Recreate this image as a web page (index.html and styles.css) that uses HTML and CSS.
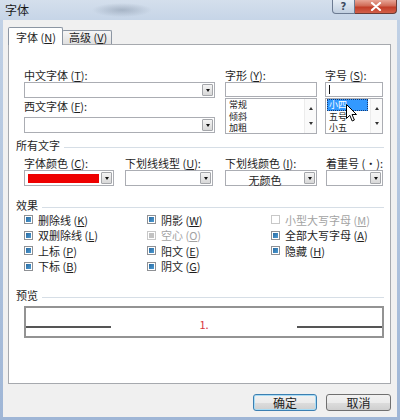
FILE: index.html
```html
<!DOCTYPE html>
<html lang="zh-CN">
<head>
<meta charset="utf-8">
<title>字体</title>
<link rel="stylesheet" href="styles.css">
</head>
<body>
<div class="window">
  <div class="titlebar">
    <span class="title">字体</span>
    <div class="caption">
      <span class="cap-help">?</span>
      <span class="cap-close"><svg width="12" height="9" viewBox="0 0 12 9"><path d="M2 1 L10 8 M10 1 L2 8" stroke="#fff" stroke-width="2.2" stroke-linecap="round"/></svg></span>
    </div>
  </div>
  <div class="client">
    <div class="tabs">
      <div class="tab active">字体 (<u>N</u>)</div>
      <div class="tab">高级 (<u>V</u>)</div>
    </div>
    <div class="panel">
      <div class="fonts">
        <div class="fcol c-main">
          <div class="lbl">中文字体 (<u>T</u>):</div>
          <div class="combo"><span class="dd"></span></div>
          <div class="lbl l2">西文字体 (<u>F</u>):</div>
          <div class="combo c2"><span class="dd"></span></div>
        </div>
        <div class="fcol c-style">
          <div class="lbl">字形 (<u>Y</u>):</div>
          <div class="edit"></div>
          <div class="list">
            <div class="items"><div class="it">常规</div><div class="it">倾斜</div><div class="it">加粗</div></div>
            <div class="vscroll"><span class="up"></span><span class="down"></span></div>
          </div>
        </div>
        <div class="fcol c-size">
          <div class="lbl">字号 (<u>S</u>):</div>
          <div class="edit"><span class="caret"></span></div>
          <div class="list">
            <div class="items"><div class="it sel">小四</div><div class="it">五号</div><div class="it">小五</div></div>
            <div class="vscroll"><span class="up"></span><span class="down"></span></div>
          </div>
        </div>
      </div>

      <div class="group g1">所有文字</div>
      <div class="row2">
        <div class="rcol r1">
          <div class="lbl">字体颜色 (<u>C</u>):</div>
          <div class="combo color"><span class="swatch"></span><span class="dd"></span></div>
        </div>
        <div class="rcol r2">
          <div class="lbl">下划线线型 (<u>U</u>):</div>
          <div class="combo"><span class="dd"></span></div>
        </div>
        <div class="rcol r3">
          <div class="lbl">下划线颜色 (<u>I</u>):</div>
          <div class="combo"><span class="cval">无颜色</span><span class="dd"></span></div>
        </div>
        <div class="rcol r4">
          <div class="lbl">着重号 (·):</div>
          <div class="combo"><span class="dd"></span></div>
        </div>
      </div>

      <div class="group g2">效果</div>
      <div class="effects">
        <div class="chk"><span class="box on"></span>删除线 (<u>K</u>)</div>
        <div class="chk"><span class="box on"></span>双删除线 (<u>L</u>)</div>
        <div class="chk"><span class="box on"></span>上标 (<u>P</u>)</div>
        <div class="chk"><span class="box on"></span>下标 (<u>B</u>)</div>
        <div class="chk"><span class="box on"></span>阴影 (<u>W</u>)</div>
        <div class="chk dis"><span class="box on"></span>空心 (<u>O</u>)</div>
        <div class="chk"><span class="box on"></span>阳文 (<u>E</u>)</div>
        <div class="chk"><span class="box on"></span>阴文 (<u>G</u>)</div>
        <div class="chk dis"><span class="box"></span>小型大写字母 (<u>M</u>)</div>
        <div class="chk"><span class="box on"></span>全部大写字母 (<u>A</u>)</div>
        <div class="chk"><span class="box on"></span>隐藏 (<u>H</u>)</div>
      </div>

      <div class="group g3">预览</div>
      <div class="preview">
        <span class="pline"></span>
        <span class="ptext">1.</span>
        <span class="pline"></span>
      </div>
    </div>
    <div class="buttons">
      <div class="btn default">确定</div>
      <div class="btn">取消</div>
    </div>
  </div>
  <svg class="pointer" width="12" height="19" viewBox="0 0 12 19"><path d="M0.5 0.5 L0.5 14.5 L3.8 11.3 L6.2 17 L8.4 16 L6 10.5 L10.5 10.5 Z" fill="#fff" stroke="#000" stroke-width="1"/></svg>
</div>
</body>
</html>
```

FILE: styles.css
```css
* { box-sizing: border-box; }
html, body { margin: 0; padding: 0; }
body {
  width: 400px;
  height: 420px;
  overflow: hidden;
  font-family: "Noto Sans CJK SC", "Noto Sans", sans-serif;
  font-size: 11px;
  color: #1e1e1e;
}
u { text-decoration-thickness: 1px; text-underline-offset: 1px; }

.window {
  position: relative;
  width: 400px;
  height: 420px;
  display: flex;
  flex-direction: column;
  background: linear-gradient(#c2d2e6, #9fb6d6);
}

.titlebar {
  height: 20px;
  display: flex;
  justify-content: space-between;
  align-items: flex-start;
  background:
    radial-gradient(ellipse 30px 7px at 122px 10px, rgba(120,135,155,0.45), rgba(120,135,155,0)),
    linear-gradient(#d4dfec, #c6d5e7);
}
.title {
  font-size: 12px;
  line-height: 19px;
  padding-left: 5px;
  color: #1a1a1a;
}
.caption { display: flex; margin-right: 3px; }
.cap-help {
  width: 23px;
  height: 14px;
  border: 1px solid #6c7b92;
  border-top: none;
  border-radius: 0 0 0 4px;
  background: linear-gradient(#e6edf5, #c1cfe0);
  color: #3c4a60;
  font-family: "DejaVu Sans", sans-serif;
  font-weight: bold;
  font-size: 10px;
  line-height: 13px;
  text-align: center;
}
.cap-close {
  width: 42px;
  height: 14px;
  border: 1px solid #6a3b35;
  border-top: none;
  border-left: none;
  border-radius: 0 0 4px 0;
  background: linear-gradient(#e8a596 0%, #d06a56 45%, #c23d28 55%, #d2604a 100%);
  display: flex;
  align-items: center;
  justify-content: center;
}

.client {
  flex: 1;
  margin: 0 3px 3px 3px;
  background: #f0f0f0;
  padding: 7px 6px 0 5px;
  display: flex;
  flex-direction: column;
}

.tabs {
  display: flex;
  align-items: flex-end;
  height: 17px;
}
.tab {
  height: 14px;
  width: 50px;
  margin-left: -1px;
  border: 1px solid #8c96a3;
  border-bottom: none;
  border-radius: 2px 2px 0 0;
  background: linear-gradient(#f6f6f6, #e0e0e0);
  line-height: 13px;
  padding-left: 6px;
  white-space: nowrap;
}
.tab.active {
  position: relative;
  z-index: 1;
  margin-left: 0;
  width: 55px;
  height: 18px;
  margin-bottom: -1px;
  background: #fff;
  line-height: 19px;
  padding-left: 7px;
}

.panel {
  height: 340px;
  border: 1px solid #a6a9ae;
  background: #fff;
  padding: 0 6px 0 7px;
}

.lbl {
  height: 14px;
  line-height: 14px;
  white-space: nowrap;
}

.fonts {
  display: flex;
  margin-top: 23px;
  padding-left: 8px;
}
.c-main { width: 191px; }
.c-style { width: 92px; margin-left: 10px; }
.c-size { width: 58px; margin-left: 8px; }

.combo {
  height: 16px;
  border: 1px solid #abadb3;
  background: #fff;
  display: flex;
  align-items: center;
  justify-content: flex-end;
  padding-right: 1px;
}
.l2 { margin-top: 1px; }
.c2 { margin-top: 4px; }

.dd {
  width: 11px;
  height: 12px;
  border: 1px solid #a4a6aa;
  border-radius: 1px;
  background: linear-gradient(#f4f4f4, #d8d8d8);
  display: flex;
  align-items: center;
  justify-content: center;
  flex: none;
}
.dd::after {
  content: "";
  border-left: 2.5px solid transparent;
  border-right: 2.5px solid transparent;
  border-top: 3px solid #111;
}

.edit {
  height: 15px;
  border: 1px solid #abadb3;
  background: #fff;
  padding: 2px 0 0 3px;
}
.caret {
  display: block;
  width: 1px;
  height: 9px;
  background: #111;
}

.list {
  margin-top: 1px;
  height: 36px;
  border: 1px solid #abadb3;
  display: flex;
}
.items {
  flex: 1;
  padding: 0 0 0 1px;
  font-size: 9px;
  line-height: 11.5px;
}
.it {
  height: 11.5px;
  padding-left: 2px;
}
.it.sel {
  width: 41px;
  background: #3399ff;
  color: #fff;
  outline: 1px dotted #1a3a70;
  outline-offset: -1px;
}
.vscroll {
  width: 12px;
  background: #fafafa;
  border-left: 1px solid #ececec;
  display: flex;
  flex-direction: column;
  justify-content: space-between;
  align-items: center;
  padding: 8px 0 8px;
}
.up, .down {
  width: 0;
  height: 0;
  border-left: 2px solid transparent;
  border-right: 2px solid transparent;
}
.up { border-bottom: 3px solid #333; }
.down { border-top: 3px solid #333; }

.group {
  display: flex;
  align-items: center;
  height: 13px;
  line-height: 13px;
  white-space: nowrap;
}
.group::after {
  content: "";
  flex: 1;
  border-top: 1px solid #d6dee6;
  margin: 3px 0 0 4px;
}
.g1 { margin-top: 5px; }
.g2 { margin-top: 13px; }
.g3 { margin-top: 15px; }

.row2 {
  display: flex;
  margin-top: 4px;
  padding-left: 8px;
}
.r1 { width: 90px; }
.r2 { width: 88px; margin-left: 11px; }
.r3 { width: 92px; margin-left: 12px; }
.r4 { width: 57px; margin-left: 9px; }
.combo.color { justify-content: space-between; padding-left: 3px; }
.swatch {
  width: 71px;
  height: 9px;
  background: #ee0000;
}
.cval {
  flex: 1;
  text-align: center;
  font-size: 11px;
  line-height: 14px;
  margin-top: 3px;
}

.effects {
  display: grid;
  padding-left: 8px;
  grid-template-columns: 123px 124px 1fr;
  grid-template-rows: repeat(4, 15.5px);
  grid-auto-flow: column;
}
.chk {
  display: flex;
  align-items: center;
  white-space: nowrap;
}
.box {
  width: 9px;
  height: 9px;
  border: 1px solid #8e9094;
  background: #fff;
  padding: 1px;
  margin-right: 5px;
  flex: none;
}
.box.on::after {
  content: "";
  display: block;
  width: 5px;
  height: 5px;
  background: linear-gradient(135deg, #2a6aa0, #4c9ad2);
}
.chk.dis { color: #a3a3a3; }
.chk.dis .box { border-color: #c8c8c8; }
.chk.dis .box.on::after { background: #c2c2c2; }

.preview {
  margin: 4px 0 0 8px;
  height: 32px;
  border: 2px solid #939393;
  display: flex;
  align-items: center;
  justify-content: space-between;
}
.pline {
  width: 85px;
  height: 2px;
  background: #555;
  margin-top: 10px;
}
.ptext {
  color: #d8343c;
  font-size: 11px;
  line-height: 12px;
  margin-top: 4px;
}

.buttons {
  display: flex;
  justify-content: flex-end;
  gap: 9px;
  margin-top: 10px;
}
.btn {
  width: 65px;
  height: 17px;
  border: 1px solid #707070;
  border-radius: 3px;
  background: linear-gradient(#f2f2f2 0%, #ebebeb 50%, #dddddd 51%, #cfcfcf 100%);
  font-size: 12px;
  line-height: 15px;
  text-align: center;
}
.btn.default {
  width: 64px;
  border-color: #3c7fb1;
  box-shadow: inset 0 0 0 1px #a8dcf5;
}

.pointer {
  position: absolute;
  left: 346px;
  top: 104px;
}
```
